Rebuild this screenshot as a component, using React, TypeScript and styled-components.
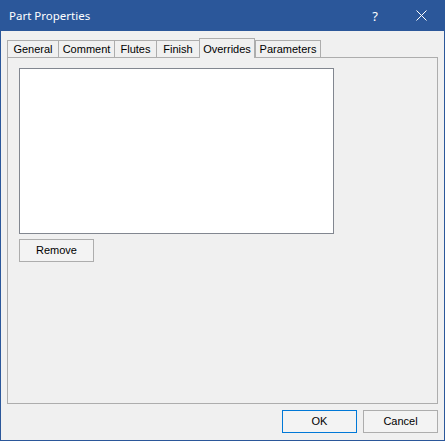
import React from "react";
import styled, { createGlobalStyle } from "styled-components";

const GlobalStyle = createGlobalStyle`
  html, body { margin: 0; padding: 0; background: #2b579a; }
  * { box-sizing: border-box; }
`;

const Window = styled.div`
  width: 445px;
  height: 441px;
  display: flex;
  flex-direction: column;
  border: 1px solid #2b579a;
  border-top: none;
  background: #2b579a;
`;

const TitleBar = styled.div`
  height: 31px;
  display: flex;
  align-items: center;
  color: #ffffff;
  font-family: "Noto Sans", "Open Sans", sans-serif;
  font-size: 11.5px;
`;

const Title = styled.div`
  flex: 1;
  padding-left: 8px;
  padding-bottom: 1px;
`;

const CaptionButton = styled.div`
  width: 46px;
  height: 31px;
  display: flex;
  align-items: center;
  justify-content: center;
  color: #ffffff;
  font-family: "Noto Sans", sans-serif;
  font-size: 13px;
`;

const Client = styled.div`
  flex: 1;
  background: #f0f0f0;
  padding: 9px 6px 7px 6px;
  display: flex;
  flex-direction: column;
  font-family: "Liberation Sans", Arial, sans-serif;
  font-size: 11px;
  color: #000000;
`;

const TabStrip = styled.div`
  height: 17px;
  display: flex;
  align-items: flex-end;
`;

const Tab = styled.div<{ $w: number; $active?: boolean; $last?: boolean }>`
  width: ${(p) => p.$w}px;
  height: ${(p) => (p.$active ? 20 : 17)}px;
  margin-bottom: ${(p) => (p.$active ? -1 : 0)}px;
  position: relative;
  z-index: ${(p) => (p.$active ? 1 : 0)};
  background: #f0f0f0;
  border-top: 1px solid #adadad;
  border-left: 1px solid #adadad;
  border-right: ${(p) => (p.$last || p.$active ? "1px solid #adadad" : "none")};
  display: flex;
  justify-content: center;
  align-items: ${(p) => (p.$active ? "flex-end" : "center")};
  padding-bottom: ${(p) => (p.$active ? 3 : 1)}px;
  white-space: nowrap;
`;

const Pane = styled.div`
  flex: 1;
  border: 1px solid #adadad;
  padding: 10px 11px;
  display: flex;
  flex-direction: column;
  align-items: flex-start;
  gap: 5px;
`;

const ListBox = styled.div`
  width: 315px;
  height: 166px;
  background: #ffffff;
  border: 1px solid #828790;
`;

const Button = styled.button<{ $default?: boolean }>`
  width: 75px;
  height: 23px;
  margin: 0;
  padding: 0 0 1px 0;
  background: #f3f3f3;
  border: 1px solid ${(p) => (p.$default ? "#0078d7" : "#adadad")};
  font-family: "Liberation Sans", Arial, sans-serif;
  font-size: 11px;
  color: #000000;
`;

const Footer = styled.div`
  margin-top: 6px;
  display: flex;
  justify-content: flex-end;
  gap: 6px;
`;

const tabs: { label: string; w: number }[] = [
  { label: "General", w: 51 },
  { label: "Comment", w: 56 },
  { label: "Flutes", w: 42 },
  { label: "Finish", w: 43 },
  { label: "Overrides", w: 56 },
  { label: "Parameters", w: 66 },
];

export default function App() {
  return (
    <>
      <GlobalStyle />
      <Window>
        <TitleBar>
          <Title>Part Properties</Title>
          <CaptionButton>?</CaptionButton>
          <CaptionButton>
            <svg width="11" height="11" viewBox="0 0 11 11">
              <path d="M0.5 0.5 L10.5 10.5 M10.5 0.5 L0.5 10.5" stroke="#ffffff" strokeWidth="1" fill="none" />
            </svg>
          </CaptionButton>
        </TitleBar>
        <Client>
          <TabStrip>
            {tabs.map((t, i) => (
              <Tab key={t.label} $w={t.w} $active={t.label === "Overrides"} $last={i === tabs.length - 1}>
                {t.label}
              </Tab>
            ))}
          </TabStrip>
          <Pane>
            <ListBox />
            <Button>Remove</Button>
          </Pane>
          <Footer>
            <Button $default>OK</Button>
            <Button>Cancel</Button>
          </Footer>
        </Client>
      </Window>
    </>
  );
}
